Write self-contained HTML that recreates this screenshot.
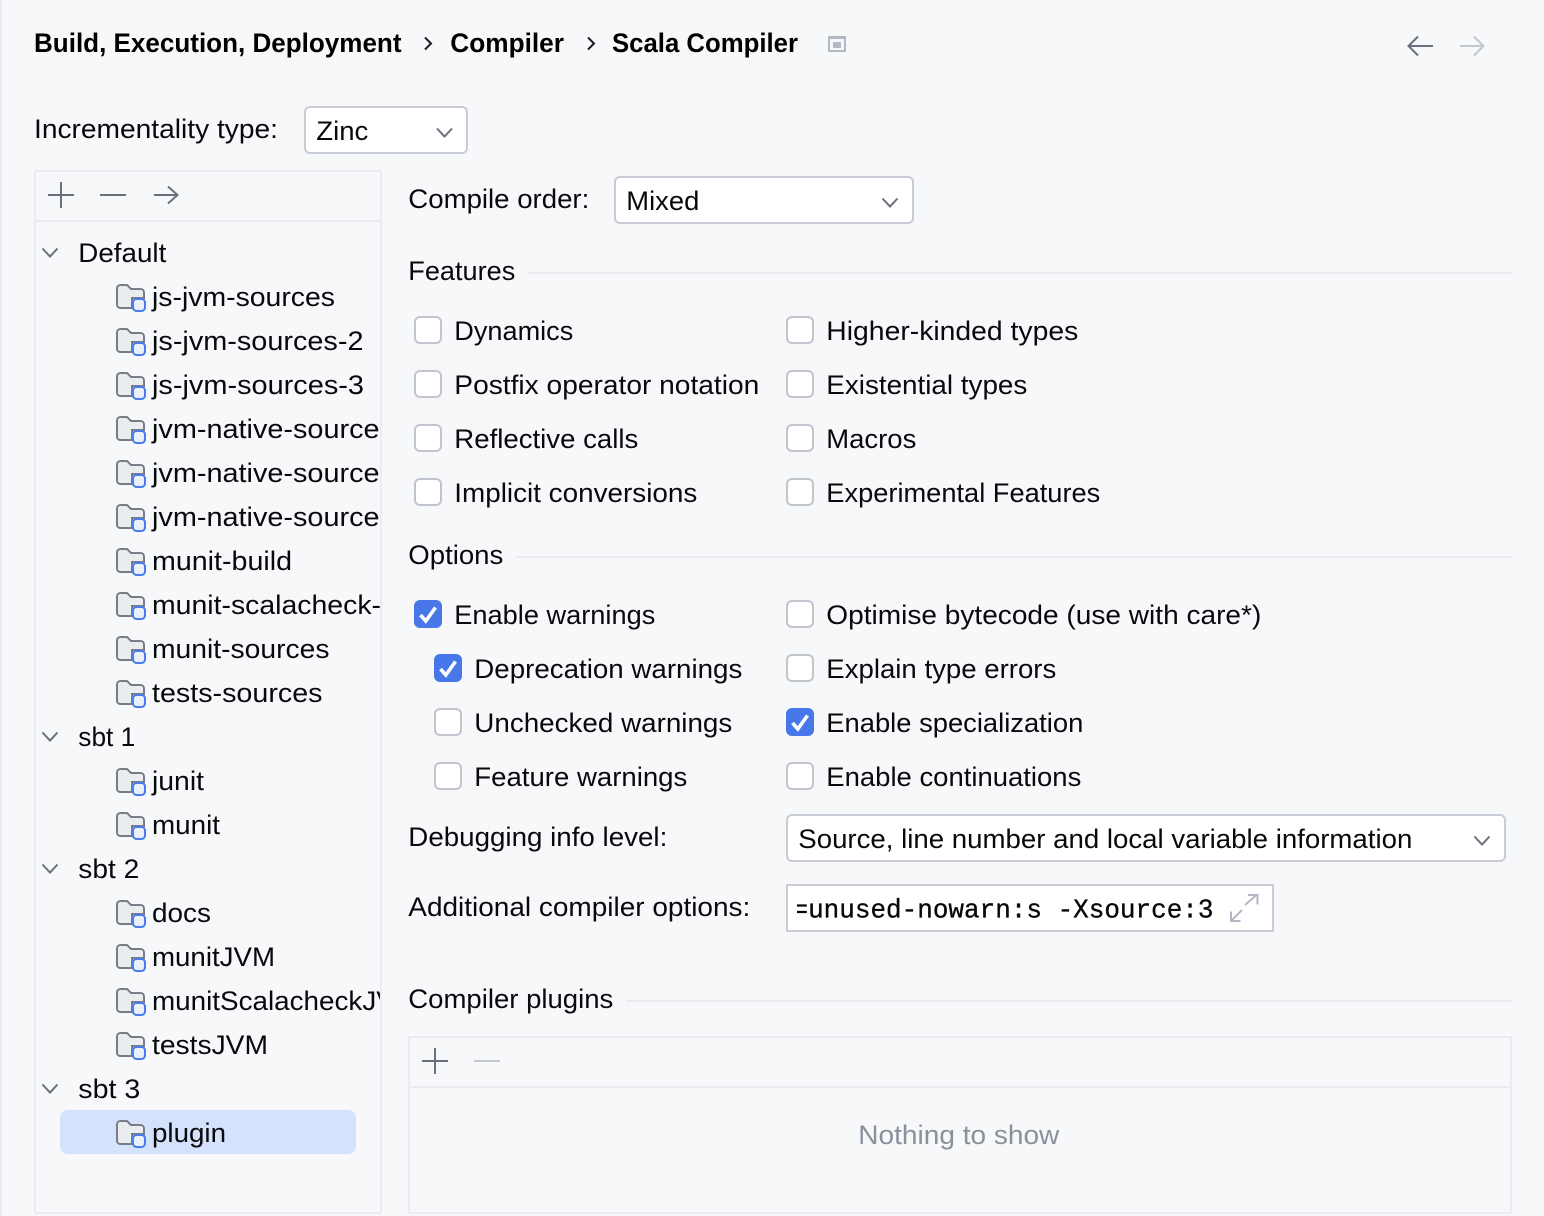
<!DOCTYPE html>
<html lang="en">
<head>
<meta charset="utf-8">
<title>Scala Compiler</title>
<style>
html,body{margin:0;padding:0;background:#f7f8fa;width:1544px;height:1216px;overflow:hidden}
svg{display:block}
text{font-family:"Liberation Sans",sans-serif;font-size:27px;fill:#08090c}
.b{font-weight:700;fill:#000}
.m{font-family:"Liberation Mono",monospace;font-size:27px;stroke:#08090c;stroke-width:.35}
.box{fill:#fff;stroke:#c9ccd6;stroke-width:2}
.ln{fill:#ebecf0}
.ic{fill:none;stroke:#6c707e;stroke-width:2}
.dis{fill:none;stroke:#c4c6ce;stroke-width:2}
</style>
</head>
<body>
<svg width="1544" height="1216" viewBox="0 0 1544 1216" xmlns="http://www.w3.org/2000/svg">
<defs>
<symbol id="f" width="30" height="28" viewBox="0 0 30 28" overflow="visible">
<path d="M1 4.5C1 2.500 2.500 1 4.500 1H11L15 5H24.500C26.500 5 28 6.500 28 8.500V14H16V24H4.500C2.500 24 1 22.500 1 20.500Z" fill="#ebecf0" stroke="#787c8a" stroke-width="2"/>
<rect x="17" y="15" width="12" height="12" rx="3.500" fill="#e9f0fe" stroke="#4a7cf0" stroke-width="2"/>
</symbol>
<symbol id="u" width="28" height="28" viewBox="0 0 28 28" overflow="visible">
<rect x="1" y="1" width="26" height="26" rx="5" fill="#fff" stroke="#c2c5d0" stroke-width="2"/>
</symbol>
<symbol id="c" width="28" height="28" viewBox="0 0 28 28" overflow="visible">
<rect x="0" y="0" width="28" height="28" rx="6" fill="#4777e8"/>
<path d="M6.500 15L11.800 21L21.500 7.500" fill="none" stroke="#fff" stroke-width="3.600"/>
</symbol>
<symbol id="d" width="18" height="12" viewBox="0 0 18 12" overflow="visible">
<path d="M1.500 1.500L9 9.500L16.500 1.500" fill="none" stroke="#6c707e" stroke-width="2"/>
</symbol>
<clipPath id="tc"><rect x="36" y="222" width="344" height="990"/></clipPath>
<clipPath id="mc"><rect x="797" y="888" width="430" height="40"/></clipPath>
</defs>

<rect width="1544" height="1216" fill="#f7f8fa"/>
<rect width="2" height="1216" fill="#ebecf0"/>

<!-- Breadcrumb -->
<text class="b" x="34" y="52" textLength="367.500" lengthAdjust="spacingAndGlyphs">Build, Execution, Deployment</text>
<path d="M425 37.500L431 43.500L425 49.500" fill="none" stroke="#1a1c22" stroke-width="2"/>
<text class="b" x="450.300" y="52" textLength="113.700" lengthAdjust="spacingAndGlyphs">Compiler</text>
<path d="M588 37.500L594 43.500L588 49.500" fill="none" stroke="#1a1c22" stroke-width="2"/>
<text class="b" x="612" y="52" textLength="186" lengthAdjust="spacingAndGlyphs">Scala Compiler</text>
<rect x="829" y="37" width="16" height="14" fill="none" stroke="#b4b8c4" stroke-width="2"/>
<rect x="828" y="36" width="18" height="3" fill="#b4b8c4"/>
<rect x="833" y="42" width="8" height="6" fill="#b4b8c4"/>
<path d="M1433 46H1409M1418 36.500L1408.500 46L1418 55.500" class="ic"/>
<path d="M1460 46H1483M1474 36.500L1483.500 46L1474 55.500" class="dis"/>

<!-- Incrementality -->
<text x="34" y="138" textLength="244" lengthAdjust="spacingAndGlyphs">Incrementality type:</text>
<rect class="box" x="305" y="107" width="162" height="46" rx="5"/>
<text x="316.300" y="140" textLength="52" lengthAdjust="spacingAndGlyphs">Zinc</text>
<use href="#d" x="435.500" y="127"/>

<!-- Left panel -->
<rect x="35" y="171" width="346" height="1042" fill="none" stroke="#ebecf0" stroke-width="2"/>
<rect x="36" y="220" width="344" height="2" class="ln"/>
<path d="M48 195H74M61 182V208M100 195H126" class="ic"/>
<path d="M154 195H177M168 186.500L177.500 195L168 203.500" class="ic"/>
<rect x="60" y="1110" width="296" height="44" rx="8" fill="#d4e2fb"/>

<g clip-path="url(#tc)">
<text x="78.300" y="262" textLength="88" lengthAdjust="spacingAndGlyphs">Default</text>
<text x="152" y="306" textLength="183" lengthAdjust="spacingAndGlyphs">js-jvm-sources</text>
<text x="152" y="350" textLength="211.500" lengthAdjust="spacingAndGlyphs">js-jvm-sources-2</text>
<text x="152" y="394" textLength="212" lengthAdjust="spacingAndGlyphs">js-jvm-sources-3</text>
<text x="152" y="438" textLength="242" lengthAdjust="spacingAndGlyphs">jvm-native-sources</text>
<text x="152" y="482" textLength="242" lengthAdjust="spacingAndGlyphs">jvm-native-sources</text>
<text x="152" y="526" textLength="242" lengthAdjust="spacingAndGlyphs">jvm-native-sources</text>
<text x="152" y="570" textLength="140" lengthAdjust="spacingAndGlyphs">munit-build</text>
<text x="152" y="614" textLength="229" lengthAdjust="spacingAndGlyphs">munit-scalacheck-</text>
<text x="152" y="658" textLength="177.500" lengthAdjust="spacingAndGlyphs">munit-sources</text>
<text x="152" y="702" textLength="170.500" lengthAdjust="spacingAndGlyphs">tests-sources</text>
<text x="78.300" y="746" textLength="57" lengthAdjust="spacingAndGlyphs">sbt 1</text>
<text x="152" y="790" textLength="52" lengthAdjust="spacingAndGlyphs">junit</text>
<text x="152" y="834" textLength="68" lengthAdjust="spacingAndGlyphs">munit</text>
<text x="78.300" y="878" textLength="61" lengthAdjust="spacingAndGlyphs">sbt 2</text>
<text x="152" y="922" textLength="59" lengthAdjust="spacingAndGlyphs">docs</text>
<text x="152" y="966" textLength="123" lengthAdjust="spacingAndGlyphs">munitJVM</text>
<text x="152" y="1010" textLength="266" lengthAdjust="spacingAndGlyphs">munitScalacheckJVM</text>
<text x="152" y="1054" textLength="116" lengthAdjust="spacingAndGlyphs">testsJVM</text>
<text x="78.300" y="1098" textLength="62" lengthAdjust="spacingAndGlyphs">sbt 3</text>
<text x="152" y="1142" textLength="74" lengthAdjust="spacingAndGlyphs">plugin</text>
</g>

<use href="#d" x="41" y="247"/>
<use href="#d" x="41" y="731"/>
<use href="#d" x="41" y="863"/>
<use href="#d" x="41" y="1083"/>

<use href="#f" x="116" y="284"/>
<use href="#f" x="116" y="328"/>
<use href="#f" x="116" y="372"/>
<use href="#f" x="116" y="416"/>
<use href="#f" x="116" y="460"/>
<use href="#f" x="116" y="504"/>
<use href="#f" x="116" y="548"/>
<use href="#f" x="116" y="592"/>
<use href="#f" x="116" y="636"/>
<use href="#f" x="116" y="680"/>
<use href="#f" x="116" y="768"/>
<use href="#f" x="116" y="812"/>
<use href="#f" x="116" y="900"/>
<use href="#f" x="116" y="944"/>
<use href="#f" x="116" y="988"/>
<use href="#f" x="116" y="1032"/>
<use href="#f" x="116" y="1120"/>

<!-- Compile order -->
<text x="408.300" y="208" textLength="181" lengthAdjust="spacingAndGlyphs">Compile order:</text>
<rect class="box" x="615" y="177" width="298" height="46" rx="5"/>
<text x="626.300" y="210" textLength="73" lengthAdjust="spacingAndGlyphs">Mixed</text>
<use href="#d" x="881" y="197"/>

<!-- Features -->
<text x="408.300" y="280" textLength="107" lengthAdjust="spacingAndGlyphs">Features</text>
<rect x="528" y="272" width="984" height="2" class="ln"/>

<use href="#u" x="414" y="316"/>
<text x="454.300" y="340" textLength="119" lengthAdjust="spacingAndGlyphs">Dynamics</text>
<use href="#u" x="786" y="316"/>
<text x="826.300" y="340" textLength="252" lengthAdjust="spacingAndGlyphs">Higher-kinded types</text>
<use href="#u" x="414" y="370"/>
<text x="454.300" y="394" textLength="305" lengthAdjust="spacingAndGlyphs">Postfix operator notation</text>
<use href="#u" x="786" y="370"/>
<text x="826.300" y="394" textLength="201" lengthAdjust="spacingAndGlyphs">Existential types</text>
<use href="#u" x="414" y="424"/>
<text x="454.300" y="448" textLength="184" lengthAdjust="spacingAndGlyphs">Reflective calls</text>
<use href="#u" x="786" y="424"/>
<text x="826.300" y="448" textLength="90" lengthAdjust="spacingAndGlyphs">Macros</text>
<use href="#u" x="414" y="478"/>
<text x="454.300" y="502" textLength="243" lengthAdjust="spacingAndGlyphs">Implicit conversions</text>
<use href="#u" x="786" y="478"/>
<text x="826.300" y="502" textLength="274" lengthAdjust="spacingAndGlyphs">Experimental Features</text>

<!-- Options -->
<text x="408.300" y="564" textLength="95" lengthAdjust="spacingAndGlyphs">Options</text>
<rect x="516" y="556" width="996" height="2" class="ln"/>

<use href="#c" x="414" y="600"/>
<text x="454.300" y="624" textLength="201" lengthAdjust="spacingAndGlyphs">Enable warnings</text>
<use href="#u" x="786" y="600"/>
<text x="826.300" y="624" textLength="435" lengthAdjust="spacingAndGlyphs">Optimise bytecode (use with care*)</text>
<use href="#c" x="434" y="654"/>
<text x="474.300" y="678" textLength="268" lengthAdjust="spacingAndGlyphs">Deprecation warnings</text>
<use href="#u" x="786" y="654"/>
<text x="826.300" y="678" textLength="230" lengthAdjust="spacingAndGlyphs">Explain type errors</text>
<use href="#u" x="434" y="708"/>
<text x="474.300" y="732" textLength="258" lengthAdjust="spacingAndGlyphs">Unchecked warnings</text>
<use href="#c" x="786" y="708"/>
<text x="826.300" y="732" textLength="257" lengthAdjust="spacingAndGlyphs">Enable specialization</text>
<use href="#u" x="434" y="762"/>
<text x="474.300" y="786" textLength="213" lengthAdjust="spacingAndGlyphs">Feature warnings</text>
<use href="#u" x="786" y="762"/>
<text x="826.300" y="786" textLength="255" lengthAdjust="spacingAndGlyphs">Enable continuations</text>

<!-- Debugging -->
<text x="408.300" y="846" textLength="259" lengthAdjust="spacingAndGlyphs">Debugging info level:</text>
<rect class="box" x="787" y="815" width="718" height="46" rx="5"/>
<text x="798.300" y="848" textLength="614" lengthAdjust="spacingAndGlyphs">Source, line number and local variable information</text>
<use href="#d" x="1473" y="835"/>

<!-- Additional -->
<text x="408.300" y="916" textLength="342" lengthAdjust="spacingAndGlyphs">Additional compiler options:</text>
<rect class="box" x="787" y="885" width="486" height="46"/>
<g clip-path="url(#mc)"><text class="m" x="792.500" y="917.500" textLength="421" lengthAdjust="spacingAndGlyphs">=unused-nowarn:s -Xsource:3</text></g>
<path d="M1245 905L1257 894.500M1248 895H1257.500V904.500M1242 910L1231 921M1231 911.500V921H1240.500" fill="none" stroke="#b4b8c4" stroke-width="2"/>

<!-- Compiler plugins -->
<text x="408.300" y="1008" textLength="205" lengthAdjust="spacingAndGlyphs">Compiler plugins</text>
<rect x="626" y="1000" width="886" height="2" class="ln"/>
<rect x="409" y="1037" width="1102" height="176" fill="none" stroke="#ebecf0" stroke-width="2"/>
<rect x="410" y="1086" width="1100" height="2" class="ln"/>
<path d="M422 1061H448M435 1048V1074" class="ic"/>
<path d="M474 1061H500" class="dis"/>
<text x="858.300" y="1144" textLength="201" lengthAdjust="spacingAndGlyphs" style="fill:#8c8f9c">Nothing to show</text>
</svg>
</body>
</html>
